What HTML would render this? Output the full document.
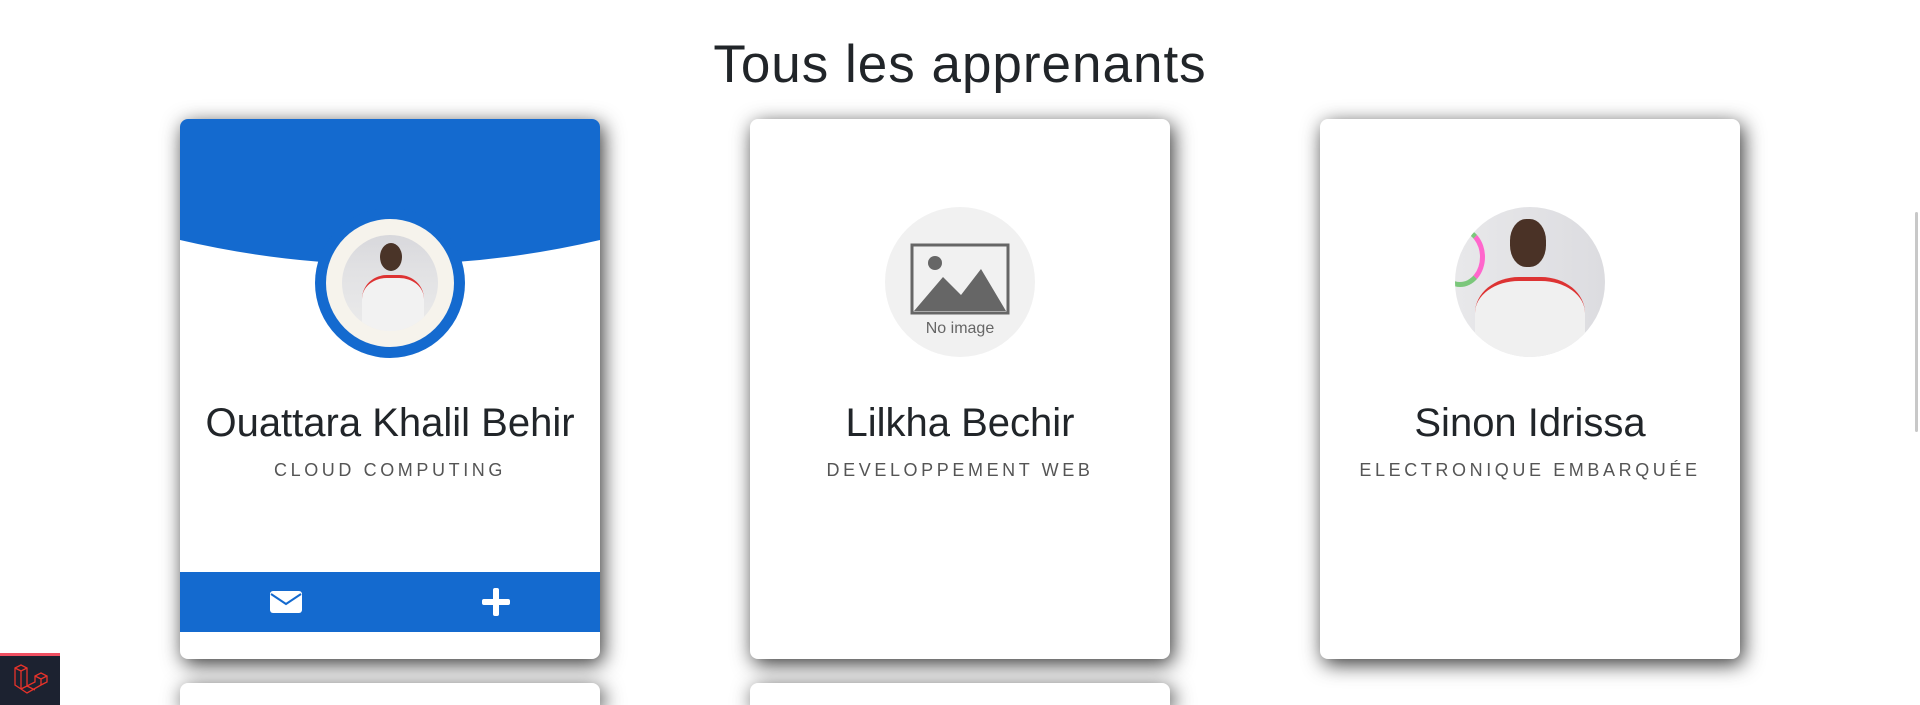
<!DOCTYPE html>
<html><head><meta charset="utf-8"><style>
*{margin:0;padding:0;box-sizing:border-box}
html,body{width:1920px;height:705px;overflow:hidden}
body{background:#fff;font-family:"Liberation Sans",sans-serif;position:relative;color:#212529}
h1{position:absolute;top:34px;left:0;width:1920px;text-align:center;font-weight:400;font-size:53px;letter-spacing:1px;color:#212529}
.card{position:absolute;top:119px;width:420px;height:540px;background:#fff;border-radius:8px;box-shadow:3px 5px 20px rgba(0,0,0,.8);overflow:hidden}
.name{position:absolute;top:282px;width:100%;text-align:center;font-size:40px;color:#212529}
.sub{position:absolute;top:341px;width:100%;text-align:center;font-size:18px;letter-spacing:3.6px;color:#555}
.av{position:absolute;left:135px;top:88px;width:150px;height:150px;border-radius:50%;overflow:hidden}
.foot{position:absolute;left:0;top:453px;width:420px;height:60px;background:#146acf}
.scroll{position:absolute;right:2px;top:212px;width:3px;height:220px;background:#c8c8c8;border-radius:2px}
</style></head><body>
<h1>Tous les apprenants</h1>

<div class="card" style="left:180px">
<svg width="420" height="160" style="position:absolute;left:0;top:0"><path d="M0 0H420V121Q210 170 0 121Z" fill="#146acf"/></svg>
<div style="position:absolute;left:135px;top:89px;width:150px;height:150px;border-radius:50%;background:#146acf"></div>
<div style="position:absolute;left:146px;top:100px;width:128px;height:128px;border-radius:50%;background:#f6f3ec"></div>
<div style="position:absolute;left:162px;top:116px;width:96px;height:96px;border-radius:50%;background:linear-gradient(#d8d8dc 0,#e2e2e4 40%,#ebebeb 100%);overflow:hidden">
<div style="position:absolute;left:38px;top:8px;width:22px;height:28px;border-radius:50%;background:#4a3428"></div>
<div style="position:absolute;left:20px;top:40px;width:62px;height:60px;border-radius:40% 40% 0 0;background:#f2f2f2;border-top:3px solid #d33"></div>
</div>
<div class="name">Ouattara Khalil Behir</div>
<div class="sub">CLOUD COMPUTING</div>
<div class="foot">
<svg width="32" height="22" style="position:absolute;left:90px;top:19px" viewBox="0 0 32 22"><rect x="0" y="0" width="32" height="22" rx="3" fill="#fff"/><path d="M1 3L16 13L31 3" stroke="#146acf" stroke-width="2" fill="none"/></svg>
<svg width="28" height="28" style="position:absolute;left:302px;top:16px"><rect x="11" y="0" width="6" height="28" rx="2" fill="#fff"/><rect x="0" y="11" width="28" height="6" rx="2" fill="#fff"/></svg>
</div>
</div>

<div class="card" style="left:750px">
<div class="av" style="background:#f1f1f1">
<svg width="150" height="150" viewBox="0 0 150 150"><rect x="27" y="38" width="96" height="68" fill="none" stroke="#666" stroke-width="3"/><circle cx="50" cy="56" r="7" fill="#666"/><path d="M29 104L58 70L76 88L96 62L121 104Z" fill="#666"/><text x="75" y="126" text-anchor="middle" font-family="Liberation Sans Narrow,Liberation Sans,sans-serif" font-size="16" fill="#666">No image</text></svg>
</div>
<div class="name">Lilkha Bechir</div>
<div class="sub">DEVELOPPEMENT WEB</div>
</div>

<div class="card" style="left:1320px">
<div class="av" style="background:linear-gradient(90deg,#e8e8ea,#dcdce0)">
<div style="position:absolute;left:-20px;top:20px;width:50px;height:60px;border-radius:50%;border:5px solid #7bc77b;border-right-color:#f6c"></div>
<div style="position:absolute;left:55px;top:12px;width:36px;height:48px;border-radius:45%;background:#4a3226"></div>
<div style="position:absolute;left:20px;top:70px;width:110px;height:90px;border-radius:40% 40% 0 0;background:#f0f0f0;border-top:4px solid #d33"></div>
</div>
<div class="name">Sinon Idrissa</div>
<div class="sub">ELECTRONIQUE EMBARQUÉE</div>
</div>

<div class="card" style="left:180px;top:683px;height:22px;border-radius:8px 8px 0 0"></div>
<div class="card" style="left:750px;top:683px;height:22px;border-radius:8px 8px 0 0"></div>

<div style="position:absolute;left:0;top:653px;width:60px;height:52px;background:#1c2230;border-top:3px solid #f05062">
<svg width="36" height="36" viewBox="0 0 36 36" style="position:absolute;left:13px;top:8px" fill="none" stroke="#e8332a" stroke-width="1.3"><path d="M2 4L8 1L14 4V22L22 18V12L28 9L34 12V18L28 21L14 29L8 25L2 21Z"/><path d="M2 4L8 7L14 4M8 7V25M14 22L8 25M22 12L28 15L34 12M28 15V21M14 22L22 26"/></svg>
</div>
<div class="scroll"></div>
</body></html>
